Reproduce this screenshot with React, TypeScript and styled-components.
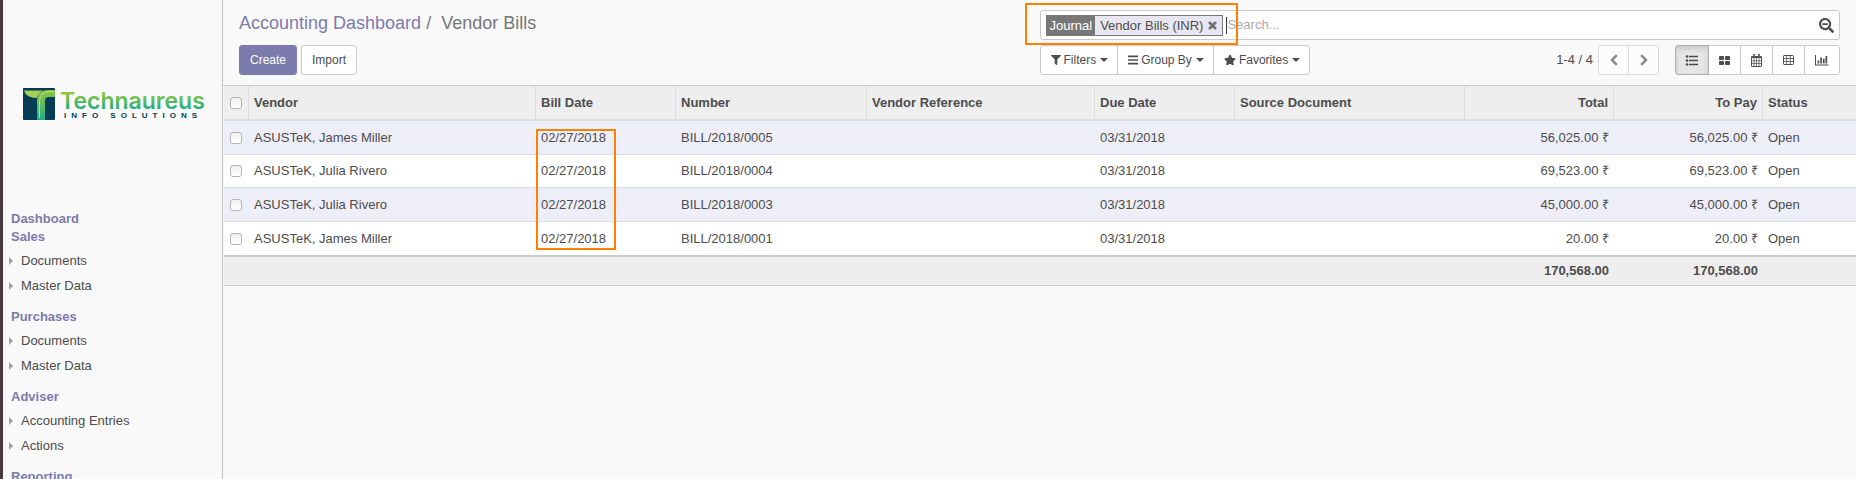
import React from 'react';
import styled, { createGlobalStyle, css } from 'styled-components';
import { FaChevronLeft, FaChevronRight, FaFilter, FaSearchMinus, FaStar, FaTimes } from 'react-icons/fa';

const colors = {
  brand: '#7c7bad',
  text: '#4c4c4c',
  muted: '#777777',
  line: '#cacaca',
  lightLine: '#dddddd',
  page: '#f9f9f9',
  head: '#eeeeee',
  stripe: '#eeeef8',
  mark: '#ff8000',
};

const GlobalStyle = createGlobalStyle`
  *, *::before, *::after { box-sizing: border-box; }
  body {
    margin: 0;
    background: ${colors.page};
    color: ${colors.text};
    font-family: 'Liberation Sans', Arial, sans-serif;
    font-size: 13px;
    line-height: 18px;
  }
  button, input { font: inherit; color: inherit; }
  a { text-decoration: none; }
`;

const Page = styled.div`
  display: flex;
  height: 100vh;
  overflow: hidden;
`;

const Sidebar = styled.nav`
  flex: 0 0 223px;
  overflow: hidden;
  border-left: 3px solid #483a40;
  border-right: 1px solid #bfbfbf;
`;

const Brand = styled.a`
  display: block;
  padding: 81px 0 0 20px;
  height: 210px;
`;

const MenuHeading = styled.a`
  display: block;
  padding-left: 8px;
  color: ${colors.brand};
  font-weight: bold;
`;

const MenuList = styled.ul`
  list-style: none;
  margin: 0;
  padding: 2px 0 10px;
`;

const MenuLink = styled.a`
  display: flex;
  align-items: center;
  gap: 8px;
  height: 25px;
  padding-left: 6px;
  color: ${colors.text};

  &::before {
    content: '';
    border: 4px solid transparent;
    border-left-color: #a0a0a0;
    border-right-width: 0;
  }
`;

const Main = styled.main`
  flex: 1;
  min-width: 0;
`;

const ControlPanel = styled.header`
  display: grid;
  grid-template-columns: 1fr 1fr;
  row-gap: 5px;
  padding: 10px 0;
  border-bottom: 1px solid ${colors.line};
`;

const Breadcrumb = styled.div`
  padding: 1px 16px;
  font-size: 18px;
  line-height: 24px;
  white-space: pre;
  color: ${colors.muted};

  a { color: ${colors.brand}; }
`;

const SearchBox = styled.div`
  position: relative;
  display: flex;
  align-items: center;
  height: 30px;
  margin-right: 16px;
  padding: 0 5px;
  background: #fff;
  border: 1px solid ${colors.line};
  border-radius: 3px;
`;

const Facet = styled.div`
  display: flex;
  height: 21px;
  line-height: 19px;
  border: 1px solid ${colors.muted};
  background: #e8e7f1;
`;

const FacetLabel = styled.span`
  padding: 0 3px;
  background: ${colors.muted};
  color: #fff;
`;

const FacetValue = styled.span`
  padding: 0 4px 0 5px;
`;

const IconButton = styled.button`
  display: flex;
  align-items: center;
  padding: 0;
  border: 0;
  background: none;
`;

const FacetRemove = styled(IconButton)`
  padding-right: 4px;
  color: #6b6b6b;
`;

const SearchField = styled.div`
  flex: 1;
  margin-left: 3px;
  border-left: 1px solid #333;

  input {
    display: block;
    width: 100%;
    height: 17px;
    padding: 0;
    border: 0;
    outline: 0;
    background: none;
  }
  input::placeholder { color: #a9a9a9; opacity: 1; }
`;

const Highlight = styled.span<{ $x: number; $y: number; $w: number; $h: number }>`
  position: absolute;
  z-index: 1;
  left: ${(p) => p.$x}px;
  top: ${(p) => p.$y}px;
  width: ${(p) => p.$w}px;
  height: ${(p) => p.$h}px;
  border: 2px solid ${colors.mark};
  pointer-events: none;
`;

const Actions = styled.div`
  display: flex;
  gap: 4px;
  padding-left: 16px;
`;

const Button = styled.button<{ $primary?: boolean }>`
  height: 30px;
  padding: 0 10px;
  font-size: 12px;
  border: 1px solid ${colors.line};
  border-radius: 3px;
  background: #fff;
  ${(p) =>
    p.$primary &&
    css`
      color: #fff;
      border-color: ${colors.brand};
      background: ${colors.brand};
    `}
`;

const Tools = styled.div`
  display: flex;
  align-items: center;
  padding-right: 16px;
`;

const ButtonGroup = styled.div<{ $faded?: boolean }>`
  display: flex;
  opacity: ${(p) => (p.$faded ? 0.65 : 1)};

  & > button + button { margin-left: -1px; }
  & > button:not(:first-child) { border-top-left-radius: 0; border-bottom-left-radius: 0; }
  & > button:not(:last-child) { border-top-right-radius: 0; border-bottom-right-radius: 0; }
`;

const MenuButton = styled(Button)`
  display: flex;
  align-items: center;
  gap: 3px;
  padding: 0 9px 0 10px;

  &::after {
    content: '';
    margin-left: 1px;
    border: 4px solid transparent;
    border-top-color: currentColor;
    border-bottom-width: 0;
  }
`;

const Pager = styled.div`
  display: flex;
  align-items: center;
  gap: 5px;
  margin-left: auto;
  margin-right: 16px;
`;

const PagerButton = styled(Button)`
  display: flex;
  align-items: center;
  justify-content: center;
  width: 31px;
  padding: 0;
`;

const ViewButton = styled(Button)<{ $active?: boolean }>`
  display: flex;
  align-items: center;
  padding: 0 9px;
  ${(p) =>
    p.$active &&
    css`
      position: relative;
      border-color: #adadad;
      background: #e6e6e6;
      box-shadow: inset 0 3px 5px rgba(0, 0, 0, 0.125);
    `}
`;

const Table = styled.table`
  width: calc(100% - 1px);
  margin-left: 1px;
  table-layout: fixed;
  border-collapse: separate;
  border-spacing: 0;
  background: #fff;
`;

const Column = styled.col<{ $w: number }>`
  width: ${(p) => p.$w}px;
`;

const HeadCell = styled.th<{ $right?: boolean }>`
  height: 35px;
  padding: 0 5px;
  text-align: ${(p) => (p.$right ? 'right' : 'left')};
  background: ${colors.head};
  border-bottom: 2px solid ${colors.lightLine};
  border-right: 1px solid ${colors.lightLine};

  &:last-child { border-right: 0; }
`;

const Cell = styled.td<{ $right?: boolean; $anchor?: boolean }>`
  position: ${(p) => (p.$anchor ? 'relative' : 'static')};
  height: 34px;
  padding: 0 5px;
  text-align: ${(p) => (p.$right ? 'right' : 'left')};
`;

const Row = styled.tr`
  &:nth-child(odd) { background: ${colors.stripe}; }
  &:nth-child(even) > td { height: 33px; }
  &:not(:last-child) > td { border-bottom: 1px solid ${colors.lightLine}; }
`;

const FootCell = styled.td`
  height: 31px;
  padding: 0 5px;
  text-align: right;
  font-weight: bold;
  background: ${colors.head};
  border-top: 2px solid ${colors.line};
  border-bottom: 1px solid ${colors.line};
`;

const Checkbox = styled.input.attrs({ type: 'checkbox' })`
  appearance: none;
  display: block;
  width: 12px;
  height: 12px;
  margin: 0 0 0 1px;
  border: 1px solid #b4b4b4;
  border-radius: 3px;
  background: linear-gradient(#f0f0f0, #fff);
`;

const Logo = () => (
  <svg width="186" height="40" viewBox="0 0 186 40" role="img" aria-label="Technaureus Info Solutions">
    <defs>
      <linearGradient id="word" x1="0" y1="0" x2="0" y2="1">
        <stop offset="0.25" stopColor="#8cc63f" />
        <stop offset="0.85" stopColor="#12a98c" />
      </linearGradient>
      <linearGradient id="stem" x1="0" y1="0" x2="0" y2="1">
        <stop offset="0" stopColor="#8cc63f" />
        <stop offset="0.5" stopColor="#5fbb62" />
        <stop offset="1" stopColor="#1fae86" />
      </linearGradient>
    </defs>
    <rect x="0" y="7" width="32" height="32" rx="1" fill="#063c55" />
    <path d="M1 9.5H20Q15 12 14 17Q3 17 1 9.5Z" fill="#a5d05a" />
    <path d="M32 9V16H26Q22 16 22 20V39H14V20Q14 9 26 9Z" fill="url(#stem)" />
    <path d="M31 10.5H26Q17 11 16.500 20V37" fill="none" stroke="#b9dd7c" strokeWidth="1" />
    <text x="37" y="28" fontSize="23" fontWeight="600" fontFamily="Inter, Liberation Sans, sans-serif" fill="url(#word)">
      Technaureus
    </text>
    <text x="41" y="37" fontSize="8" fontWeight="bold" letterSpacing="5" fontFamily="Liberation Sans, Arial, sans-serif" fill="#063c55">
      INFO SOLUTIONS
    </text>
  </svg>
);

const BarsIcon = () => (
  <svg width="10" height="10" viewBox="0 0 10 10" fill="currentColor" aria-hidden="true">
    <path d="M0 0.600h10v1.600H0zM0 4.200h10v1.600H0zM0 7.800h10v1.600H0z" />
  </svg>
);

const ListIcon = () => (
  <svg width="14" height="12" viewBox="0 0 14 12" fill="currentColor" aria-hidden="true">
    <circle cx="2" cy="2.500" r="1.300" />
    <circle cx="2" cy="6.500" r="1.300" />
    <circle cx="2" cy="10.500" r="1.300" />
    <path d="M4 1.700h9v1.600H4zM4 5.700h9v1.600H4zM4 9.700h9v1.600H4z" />
  </svg>
);

const KanbanIcon = () => (
  <svg width="13" height="12" viewBox="0 0 13 12" fill="currentColor" aria-hidden="true">
    <rect x="1" y="2" width="5" height="4" rx="0.8" />
    <rect x="7" y="2" width="5" height="4" rx="0.8" />
    <rect x="1" y="7" width="5" height="4" rx="0.8" />
    <rect x="7" y="7" width="5" height="4" rx="0.8" />
  </svg>
);

const CalendarIcon = () => (
  <svg width="13" height="14" viewBox="0 0 13 14" aria-hidden="true">
    <rect x="1.500" y="3.500" width="10" height="10" rx="0.5" fill="none" stroke="currentColor" />
    <path d="M1.500 3.500h10v1.500h-10z" fill="currentColor" />
    <path d="M4 1v3M9 1v3" stroke="currentColor" strokeWidth="2" />
    <path d="M4 1.500v2M9 1.500v2" stroke="#fff" strokeWidth="0.5" />
    <path d="M4 5v8.500M6.500 5v8.500M9 5v8.500M2 7.800h9M2 10.500h9" stroke="currentColor" strokeWidth="0.7" />
  </svg>
);

const TableIcon = () => (
  <svg width="13" height="12" viewBox="0 0 13 12" fill="none" stroke="currentColor" aria-hidden="true">
    <rect x="1.500" y="1.500" width="10" height="9" rx="0.8" />
    <path d="M4.700 2v8M8.300 2v8M1.500 4.500h10M1.500 7.500h10" strokeWidth="0.8" />
  </svg>
);

const ChartIcon = () => (
  <svg width="16" height="12" viewBox="0 0 16 12" fill="currentColor" aria-hidden="true">
    <path d="M1 1h1v9.500h12.500v1H1zM3.500 6.500h1.700v3H3.500zM6.200 3.500h1.700v6H6.200zM8.900 4.800h1.700v4.700H8.900zM11.500 2h1.700v7.500h-1.700z" />
  </svg>
);

const menu = [
  { title: 'Dashboard', items: [] },
  { title: 'Sales', items: ['Documents', 'Master Data'] },
  { title: 'Purchases', items: ['Documents', 'Master Data'] },
  { title: 'Adviser', items: ['Accounting Entries', 'Actions'] },
  { title: 'Reporting', items: [] },
];

const columns = [
  { title: 'Vendor', width: 287 },
  { title: 'Bill Date', width: 140 },
  { title: 'Number', width: 191 },
  { title: 'Vendor Reference', width: 228 },
  { title: 'Due Date', width: 140 },
  { title: 'Source Document', width: 230 },
  { title: 'Total', width: 149, right: true },
  { title: 'To Pay', width: 149, right: true },
  { title: 'Status', width: 93 },
];

const bills = [
  { vendor: 'ASUSTeK, James Miller', number: 'BILL/2018/0005', total: '56,025.00 ₹' },
  { vendor: 'ASUSTeK, Julia Rivero', number: 'BILL/2018/0004', total: '69,523.00 ₹' },
  { vendor: 'ASUSTeK, Julia Rivero', number: 'BILL/2018/0003', total: '45,000.00 ₹' },
  { vendor: 'ASUSTeK, James Miller', number: 'BILL/2018/0001', total: '20.00 ₹' },
];

const views = [
  { name: 'List', Icon: ListIcon },
  { name: 'Kanban', Icon: KanbanIcon },
  { name: 'Calendar', Icon: CalendarIcon },
  { name: 'Pivot', Icon: TableIcon },
  { name: 'Graph', Icon: ChartIcon },
];

export default function App() {
  return (
    <Page>
      <GlobalStyle />
      <Sidebar>
        <Brand href="#home">
          <Logo />
        </Brand>
        {menu.map((section) => (
          <React.Fragment key={section.title}>
            <MenuHeading href="#menu">{section.title}</MenuHeading>
            {section.items.length > 0 && (
              <MenuList>
                {section.items.map((item) => (
                  <li key={item}>
                    <MenuLink href="#menu">{item}</MenuLink>
                  </li>
                ))}
              </MenuList>
            )}
          </React.Fragment>
        ))}
      </Sidebar>
      <Main>
        <ControlPanel>
          <Breadcrumb>
            <a href="#dashboard">Accounting Dashboard</a>
            {' /  Vendor Bills'}
          </Breadcrumb>
          <SearchBox>
            <Facet>
              <FacetLabel>Journal</FacetLabel>
              <FacetValue>Vendor Bills (INR)</FacetValue>
              <FacetRemove aria-label="Remove filter">
                <FaTimes size={11} strokeWidth={40} stroke="currentColor" />
              </FacetRemove>
            </Facet>
            <SearchField>
              <input aria-label="Search" placeholder="Search..." />
            </SearchField>
            <IconButton aria-label="Search options">
              <FaSearchMinus size={15} />
            </IconButton>
            <Highlight $x={-16} $y={-8} $w={213} $h={42} />
          </SearchBox>
          <Actions>
            <Button $primary>Create</Button>
            <Button>Import</Button>
          </Actions>
          <Tools>
            <ButtonGroup>
              <MenuButton>
                <FaFilter size={10} />
                Filters
              </MenuButton>
              <MenuButton>
                <BarsIcon />
                Group By
              </MenuButton>
              <MenuButton>
                <FaStar size={12} />
                Favorites
              </MenuButton>
            </ButtonGroup>
            <Pager>
              <span>1-4 / 4</span>
              <ButtonGroup $faded>
                <PagerButton aria-label="Previous">
                  <FaChevronLeft size={12} stroke="currentColor" strokeWidth={40} />
                </PagerButton>
                <PagerButton aria-label="Next">
                  <FaChevronRight size={12} stroke="currentColor" strokeWidth={40} />
                </PagerButton>
              </ButtonGroup>
            </Pager>
            <ButtonGroup>
              {views.map(({ name, Icon }, i) => (
                <ViewButton key={name} aria-label={name} $active={i === 0}>
                  <Icon />
                </ViewButton>
              ))}
            </ButtonGroup>
          </Tools>
        </ControlPanel>
        <Table>
          <colgroup>
            <Column $w={25} />
            {columns.map((c) => (
              <Column key={c.title} $w={c.width} />
            ))}
          </colgroup>
          <thead>
            <tr>
              <HeadCell>
                <Checkbox aria-label="Select all" />
              </HeadCell>
              {columns.map((c) => (
                <HeadCell key={c.title} $right={c.right}>
                  {c.title}
                </HeadCell>
              ))}
            </tr>
          </thead>
          <tbody>
            {bills.map((bill, i) => (
              <Row key={bill.number}>
                <Cell>
                  <Checkbox aria-label={`Select ${bill.number}`} />
                </Cell>
                <Cell>{bill.vendor}</Cell>
                <Cell $anchor={i === 0}>
                  02/27/2018
                  {i === 0 && <Highlight $x={0} $y={8} $w={80} $h={121} />}
                </Cell>
                <Cell>{bill.number}</Cell>
                <Cell />
                <Cell>03/31/2018</Cell>
                <Cell />
                <Cell $right>{bill.total}</Cell>
                <Cell $right>{bill.total}</Cell>
                <Cell>Open</Cell>
              </Row>
            ))}
          </tbody>
          <tfoot>
            <tr>
              <FootCell colSpan={8}>170,568.00</FootCell>
              <FootCell>170,568.00</FootCell>
              <FootCell />
            </tr>
          </tfoot>
        </Table>
      </Main>
    </Page>
  );
}
